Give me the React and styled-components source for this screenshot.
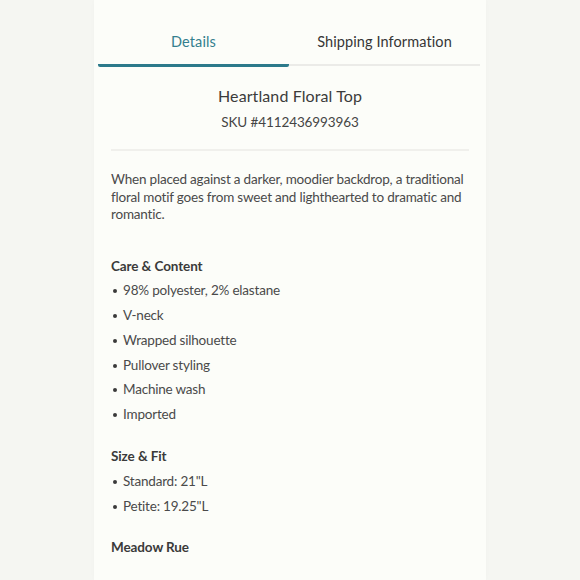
import React from 'react';
import styled, { createGlobalStyle } from 'styled-components';

const GlobalStyle = createGlobalStyle`
  html, body {
    margin: 0;
    padding: 0;
    background: #f5f6f2;
  }
  body {
    font-family: 'Lato', 'Noto Sans', sans-serif;
    color: #474747;
  }
`;

const Page = styled.div`
  width: 580px;
  height: 580px;
  overflow: hidden;
  display: flex;
  justify-content: flex-start;
`;

const Card = styled.div`
  margin-left: 94px;
  width: 392px;
  min-height: 580px;
  background: #fcfdf9;
  box-shadow: 0 0 6px rgba(0, 0, 0, 0.02);
  padding: 0 4px 0 4px;
  box-sizing: border-box;
`;

const Tabs = styled.div`
  display: flex;
  margin-right: 2px;
`;

const Tab = styled.div`
  flex: 1;
  text-align: center;
  font-size: 14.5px;
  line-height: 20px;
  letter-spacing: 0.1px;
  padding: 32px 0 12px;
  color: ${p => (p.$active ? '#347f8e' : '#363636')};
  border-bottom: ${p => (p.$active ? '3px solid #2c7a8b' : '2px solid #ebebe8')};
  margin-bottom: ${p => (p.$active ? '0' : '1px')};
  border-radius: ${p => (p.$active ? '2px' : '0')};
`;

const Body = styled.div`
  padding: 0 13px;
`;

const Head = styled.div`
  text-align: center;
  padding: 18px 0 17px;
  border-bottom: 2px solid #f0f0ec;
`;

const Title = styled.div`
  font-size: 16px;
  line-height: 22px;
  letter-spacing: 0.1px;
  color: #3b3b3b;
`;

const Sku = styled.div`
  margin-top: 5px;
  font-size: 13.5px;
  line-height: 20px;
  letter-spacing: -0.1px;
  color: #454545;
`;

const Description = styled.p`
  margin: 20px 0 0;
  font-size: 13.5px;
  line-height: 17.5px;
  letter-spacing: -0.2px;
  color: #4a4a4a;
`;

const Section = styled.div`
  margin-top: ${p => p.$first ? '30px' : '17px'};
`;

const Heading = styled.div`
  font-weight: 700;
  font-size: 13.5px;
  line-height: 24.8px;
  letter-spacing: -0.1px;
  color: #3a3a3a;
`;

const List = styled.ul`
  list-style: none;
  margin: 0;
  padding: 0;
`;

const Item = styled.li`
  display: flex;
  align-items: center;
  font-size: 13.5px;
  line-height: 24.8px;
  letter-spacing: -0.2px;
  color: #4a4a4a;
  &::before {
    content: '';
    width: 4px;
    height: 4px;
    border-radius: 50%;
    background: #3a3a3a;
    margin: 1px 6px 0 2px;
  }
`;

const sections = [
  {
    title: 'Care & Content',
    items: ['98% polyester, 2% elastane', 'V-neck', 'Wrapped silhouette', 'Pullover styling', 'Machine wash', 'Imported'],
  },
  {
    title: 'Size & Fit',
    items: ['Standard: 21"L', 'Petite: 19.25"L'],
  },
  {
    title: 'Meadow Rue',
    items: [],
  },
];

export default function App() {
  return (
    <Page>
      <GlobalStyle />
      <Card>
        <Tabs>
          <Tab $active>Details</Tab>
          <Tab>Shipping Information</Tab>
        </Tabs>
        <Body>
          <Head>
            <Title>Heartland Floral Top</Title>
            <Sku>SKU #4112436993963</Sku>
          </Head>
          <Description>
            When placed against a darker, moodier backdrop, a traditional floral motif goes from sweet and lighthearted to dramatic and romantic.
          </Description>
          {sections.map((s, i) => (
            <Section key={s.title} $first={i === 0}>
              <Heading>{s.title}</Heading>
              <List>
                {s.items.map(it => <Item key={it}>{it}</Item>)}
              </List>
            </Section>
          ))}
        </Body>
      </Card>
    </Page>
  );
}
